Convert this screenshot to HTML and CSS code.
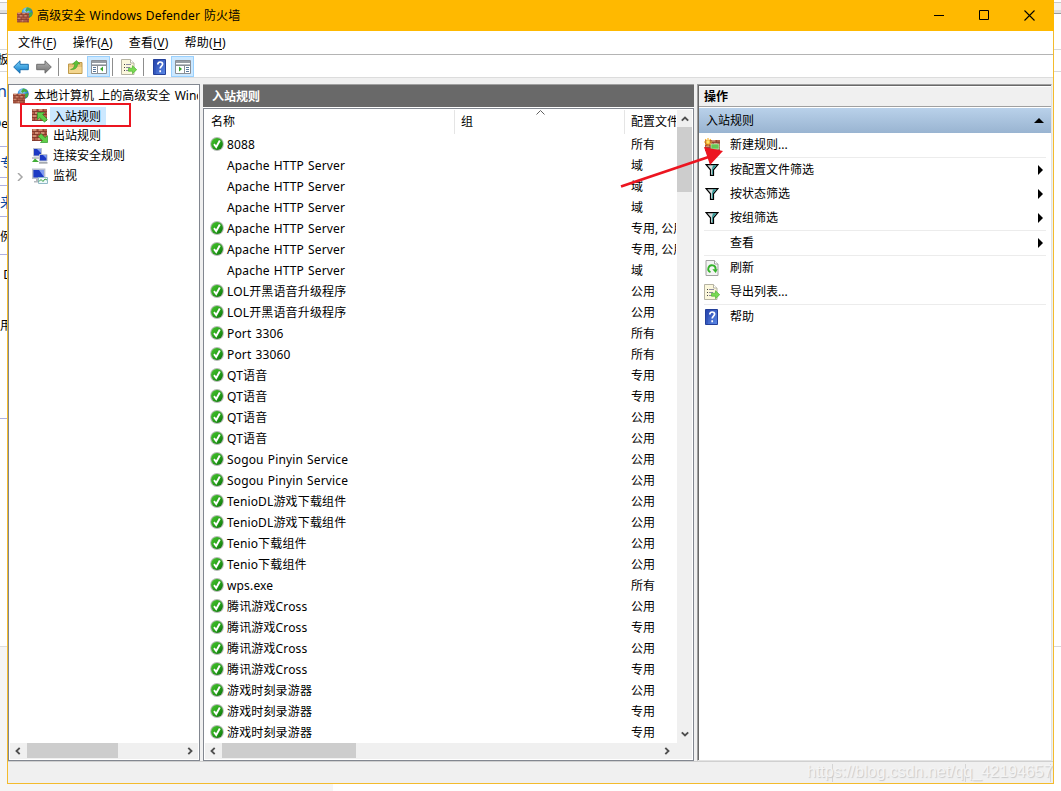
FILE: index.html
```html
<!DOCTYPE html>
<html lang="zh-CN">
<head>
  <meta charset="UTF-8">
  <meta name="viewport" content="width=device-width, initial-scale=1.0">
  <title>高级安全 Windows Defender 防火墙</title>
  <link rel="stylesheet" href="styles.css">
</head>
<body>

<!-- 图标 -->
<svg width="0" height="0" class="defs">
  <defs>
    <linearGradient id="g-ok" x1="0" y1="0" x2="1" y2="1"><stop offset="0" stop-color="#45c42c"/><stop offset=".5" stop-color="#2ba31d"/><stop offset="1" stop-color="#077008"/></linearGradient>
    <linearGradient id="g-blue" x1="0" y1="0" x2="0" y2="1"><stop offset="0" stop-color="#7fd4fa"/><stop offset="1" stop-color="#0a78c8"/></linearGradient>
    <linearGradient id="g-gray" x1="0" y1="0" x2="0" y2="1"><stop offset="0" stop-color="#b5b5b5"/><stop offset="1" stop-color="#707070"/></linearGradient>
    <linearGradient id="g-help" x1="0" y1="0" x2="1" y2="1"><stop offset="0" stop-color="#2440a8"/><stop offset="1" stop-color="#5b8ae8"/></linearGradient>
    <radialGradient id="g-globe" cx=".4" cy=".3" r=".7"><stop offset="0" stop-color="#bdeaff"/><stop offset=".5" stop-color="#3b9be6"/><stop offset="1" stop-color="#1551a8"/></radialGradient>
  </defs>
  <symbol id="ok" viewBox="0 0 14 14">
    <circle cx="7" cy="7" r="6.9" fill="#b4bab4"/>
    <circle cx="7" cy="7" r="5.9" fill="url(#g-ok)"/>
    <path d="M4 7.200l2.200 2.800 3.600-6.500" fill="none" stroke="#fff" stroke-width="1.900"/>
  </symbol>
  <symbol id="bricks" viewBox="0 0 15 12" preserveAspectRatio="none">
    <path d="M0 0h15v12H0z" fill="#b5604a"/>
    <path d="M1 0h3v2H1zM7 0h3v2H7zM3 3h3v2H3zM9 3h3v2H9zM1 6h3v2H1zM6 9h3v2H6z" fill="#d08d74"/>
    <path d="M0 2.500h15M0 5.500h15M0 8.500h15M0 11.500h15" stroke="#7c3528" stroke-width=".8"/>
    <path d="M5.500 0v3M11.500 0v3M2.500 3v3M8.500 3v3M13.500 3v3M5.500 6v3M11.500 6v3M2.500 9v3M8.500 9v3M13.500 9v3" stroke="#7c3528" stroke-width=".6"/>
  </symbol>
  <symbol id="firewall" viewBox="0 0 16 16">
    <circle cx="10.200" cy="5.700" r="5.500" fill="url(#g-globe)"/>
    <path d="M10 .4c2 .2 3.500 1 4.500 2.600l-1.500 1.500-1.500-1-2 1.500-1.500-1.500zM12 6l3-1c.8 2-.3 4-1.700 5.200L12 9z" fill="#48ad45"/>
    <use href="#bricks" x="0" y="5.500" width="12" height="10"/>
  </symbol>
  <symbol id="inbound" viewBox="0 0 16 14">
    <use href="#bricks" x="0" y="0" width="15" height="12"/>
    <path d="M5.500 3.500h7l-2 2 4.800 4.800-2.700 2.900L7.800 8.500l-2.300 2z" fill="#5fce49" stroke="#2f9a2a" stroke-width=".7"/>
  </symbol>
  <symbol id="outbound" viewBox="0 0 16 14">
    <use href="#bricks" x="0" y="0" width="15" height="12"/>
    <path d="M15.500 13.500h-7l2-2-4.200-4L9 4.700l4.200 4 2.300-2z" fill="#5fce49" stroke="#2f9a2a" stroke-width=".7"/>
  </symbol>
  <symbol id="computers" viewBox="0 0 16 16">
    <path d="M1.500.5h8v7.500h-8z" fill="#1b38c4" stroke="#b9bfce"/>
    <path d="M5 1h4v4z" fill="#7f9bf0"/>
    <path d="M0 9h7v2H0z" fill="#c4c8cc"/>
    <path d="M7.500 6.500h7.500v6.500H7.500z" fill="#1b38c4" stroke="#b9bfce"/>
    <path d="M11 7h3.500v3.500z" fill="#7f9bf0"/>
    <path d="M7 14h8.500v1.700H7z" fill="#a5aab0"/>
    <path d="M0 14l3-3.500 4 3.500z" fill="#41ad35"/>
  </symbol>
  <symbol id="monitor" viewBox="0 0 16 16">
    <path d="M.7 1.200h12v9H.7z" fill="#1c3bc4" stroke="#b9bfce" stroke-width="1.400"/>
    <path d="M7 2h5v7z" fill="#7f9bf0"/>
    <path d="M4 11h5v2h2v1.500H2V13h2z" fill="#b4b8be"/>
    <path d="M6.500 9.500h9v6h-9z" fill="#eef8fb" stroke="#91b9c6"/>
    <path d="M7 13.500l2-2 2 2 2-2.500 2 1" fill="none" stroke="#33a03c"/>
  </symbol>
  <symbol id="back" viewBox="0 0 16 14">
    <path d="M.7 7L7 .8v3.500h8.300v5.400H7v3.500z" fill="url(#g-blue)" stroke="#1b6eae"/>
  </symbol>
  <symbol id="forward" viewBox="0 0 16 14">
    <path d="M15.300 7L9 .8v3.500H.7v5.400H9v3.500z" fill="url(#g-gray)" stroke="#6f6f6f"/>
  </symbol>
  <symbol id="folder" viewBox="0 0 15 14">
    <path d="M.5 13.500V4h5l1-1.500h7.500v11z" fill="#e6c277" stroke="#bf9a4a"/>
    <path d="M1 7h12.500v6H1z" fill="#f3d68f"/>
    <path d="M2.500 9.500c2.800-.8 4.200-2.600 4.200-5.500H4.500L8.500.5 12 4H9.500c0 3.500-2.200 6-7 5.500z" fill="#5cc03c" stroke="#3c941f" stroke-width=".5"/>
  </symbol>
  <symbol id="pane-left" viewBox="0 0 16 14">
    <path d="M.5.5h15v13H.5z" fill="#fff" stroke="#8a8f96"/>
    <path d="M1 1h14v2H1z" fill="#989da4"/><path d="M1 4h14v1H1z" fill="#b8bcc2"/>
    <path d="M2 7.500h3M2 9.500h3M2 11.500h3" stroke="#58779b"/><path d="M6.500 5v8M1 5.500h14" stroke="#8a8f96"/>
    <path d="M12 6.500v5L9 9z" fill="#37a529"/>
  </symbol>
  <symbol id="pane-right" viewBox="0 0 16 14">
    <path d="M.5.5h15v13H.5z" fill="#fff" stroke="#8a8f96"/>
    <path d="M1 1h14v2H1z" fill="#989da4"/><path d="M1 4h14v1H1z" fill="#b8bcc2"/>
    <path d="M11 7.500h3M11 9.500h3M11 11.500h3" stroke="#58779b"/><path d="M9.500 5v8M1 5.500h14" stroke="#8a8f96"/>
    <path d="M4 6.500v5L7 9z" fill="#37a529"/>
  </symbol>
  <symbol id="export" viewBox="0 0 16 16">
    <path d="M.5.5h9l3.500 3.500v11.500H.5z" fill="#fbf7dc" stroke="#b5b3a2"/>
    <path d="M9.500.5V4H13" fill="#fff" stroke="#b5b3a2"/>
    <path d="M3 5.500h1M3 8.500h1M3 11.500h1" stroke="#444"/><path d="M5 5.500h5M5 8.500h4M5 11.500h3" stroke="#8c8aa0"/>
    <path d="M7.500 9.200h4V6.700l4.200 4-4.200 4v-2.500h-4z" fill="#78da52" stroke="#4fb532" stroke-width=".7"/>
  </symbol>
  <symbol id="help" viewBox="0 0 13 16">
    <path d="M.5.5h12v15H.5z" fill="url(#g-help)" stroke="#24409a"/>
    <path d="M2 1v14" stroke="#2a4cb6"/>
    <path d="M4.800 5.500c0-3.300 4.800-3.200 4.800-.4 0 2-2.400 2-2.400 4.400M7.200 11.300v1.900" fill="none" stroke="#fff" stroke-width="1.700"/>
  </symbol>
  <symbol id="newrule" viewBox="0 0 16 14">
    <use href="#bricks" x="1" y="2" width="15" height="11"/>
    <path d="M7 6h8v5H7z" fill="#66c653" stroke="#c8e6bd" stroke-width=".7"/>
    <path d="M4 0v8M0 4h8M1.200 1.200l5.600 5.600M6.800 1.200L1.200 6.800" stroke="#f4a91c" stroke-width="1.100"/>
    <circle cx="4" cy="4" r="1.700" fill="#ffe36b"/>
  </symbol>
  <symbol id="filter" viewBox="0 0 14 12">
    <path d="M1 .6h12L8.500 5.800v5.500h-3V5.800z" fill="#d5dcdc" stroke="#000" stroke-width="1.200"/>
    <path d="M8 1.300h3.500L7.900 5.500v5H7V5z" fill="#2f9492"/>
  </symbol>
  <symbol id="refresh" viewBox="0 0 13 16">
    <path d="M.5.5h8.500l3.500 3.500v11.500H.5z" fill="#f4f4f4" stroke="#a2a2a2"/>
    <path d="M9 .5V4h3.500" fill="#fff" stroke="#a2a2a2"/>
    <path d="M5 12.200A3.600 3.600 0 1 1 9.900 9.800" fill="none" stroke="#35b22b" stroke-width="1.900"/>
    <path d="M6.800 9.300h5.400L10.200 13z" fill="#35b22b"/>
  </symbol>
  <symbol id="chev" viewBox="0 0 8 8">
    <path d="M5.700.8L2.500 4l3.200 3.200" fill="none" stroke="#505050" stroke-width="1.900"/>
  </symbol>
</svg>

<!-- 后面被遮住的网页 -->
<div class="backdrop">
  <div class="edge edge-left">
    <i class="band"></i>
    <i class="line l49"></i><i class="line l71"></i>
    <i class="line blue l146"></i><i class="line blue l177"></i><i class="line blue l185"></i>
    <i class="line blue l216"></i><i class="line blue l254"></i><i class="line blue l418"></i>
    <i class="fill"></i>
    <span class="w w1">板</span>
    <span class="w w2 link">n</span>
    <span class="w w3">De</span>
    <span class="w w4 link">专</span>
    <span class="w w5 link">来</span>
    <span class="w w6">例</span>
    <span class="w w7">D</span>
    <span class="w w8">用</span>
  </div>
  <div class="edge edge-right">
    <i class="band"></i>
    <i class="line l49"></i><i class="line l71"></i>
    <i class="line l646"></i>
  </div>
  <div class="floor"></div>
</div>

<div class="window">
  <div class="titlebar">
    <svg class="app-icon"><use href="#firewall"/></svg>
    <span class="title">高级安全 Windows Defender 防火墙</span>
    <div class="controls">
      <svg width="10" height="10"><path d="M0 5.500h10" stroke="#000"/></svg>
      <svg width="10" height="10"><path d="M.5.5h9v9h-9z" fill="none" stroke="#000"/></svg>
      <svg width="11" height="11"><path d="M.5.5l10 10M10.500.5l-10 10" stroke="#000" stroke-width="1.100"/></svg>
    </div>
  </div>

  <div class="menubar">
    <span>文件(<u>F</u>)</span>
    <span>操作(<u>A</u>)</span>
    <span>查看(<u>V</u>)</span>
    <span>帮助(<u>H</u>)</span>
  </div>

  <div class="toolbar">
    <div class="tool t-back"><svg width="16" height="14"><use href="#back"/></svg></div>
    <div class="tool"><svg width="16" height="14"><use href="#forward"/></svg></div>
    <i class="sep sep-first"></i>
    <div class="tool"><svg width="15" height="14"><use href="#folder"/></svg></div>
    <div class="tool on"><svg width="16" height="14"><use href="#pane-left"/></svg></div>
    <i class="sep"></i>
    <div class="tool"><svg width="16" height="16"><use href="#export"/></svg></div>
    <i class="sep sep-last"></i>
    <div class="tool"><svg width="13" height="16"><use href="#help"/></svg></div>
    <div class="tool on"><svg width="16" height="14"><use href="#pane-right"/></svg></div>
  </div>

  <div class="panes">
    <!-- 左侧树 -->
    <div class="tree">
      <div class="node root"><svg width="16" height="16"><use href="#firewall"/></svg><span>本地计算机 上的高级安全 Wind</span></div>
      <div class="node"><svg width="16" height="14"><use href="#inbound"/></svg><span class="selected">入站规则</span></div>
      <div class="node"><svg width="16" height="14"><use href="#outbound"/></svg><span>出站规则</span></div>
      <div class="node"><svg width="16" height="16"><use href="#computers"/></svg><span>连接安全规则</span></div>
      <div class="node"><svg class="expander" width="8" height="8"><path d="M2 0l4 4-4 4" fill="none" stroke="#a6a6a6" stroke-width="1.500"/></svg><svg width="16" height="16"><use href="#monitor"/></svg><span>监视</span></div>
      <div class="hscroll">
        <svg width="8" height="8"><use href="#chev"/></svg>
        <i class="thumb"></i>
        <svg class="flip" width="8" height="8"><use href="#chev"/></svg>
      </div>
    </div>

    <!-- 规则列表 -->
    <div class="rules">
      <div class="caption">入站规则</div>
      <div class="list">
        <div class="list-main">
          <div class="table">
            <div class="head">
              <div class="c-name">名称</div>
              <div class="c-group">组<svg class="sort" width="9" height="5"><path d="M.5 4.500l4-4 4 4" fill="none" stroke="#606060"/></svg></div>
              <div class="c-profile">配置文件</div>
            </div>
            <div class="row"><svg><use href="#ok"/></svg><span>8088</span><em>所有</em></div>
            <div class="row"><svg></svg><span>Apache HTTP Server</span><em>域</em></div>
            <div class="row"><svg></svg><span>Apache HTTP Server</span><em>域</em></div>
            <div class="row"><svg></svg><span>Apache HTTP Server</span><em>域</em></div>
            <div class="row"><svg><use href="#ok"/></svg><span>Apache HTTP Server</span><em>专用, 公用</em></div>
            <div class="row"><svg><use href="#ok"/></svg><span>Apache HTTP Server</span><em>专用, 公用</em></div>
            <div class="row"><svg></svg><span>Apache HTTP Server</span><em>域</em></div>
            <div class="row"><svg><use href="#ok"/></svg><span>LOL开黑语音升级程序</span><em>公用</em></div>
            <div class="row"><svg><use href="#ok"/></svg><span>LOL开黑语音升级程序</span><em>公用</em></div>
            <div class="row"><svg><use href="#ok"/></svg><span>Port 3306</span><em>所有</em></div>
            <div class="row"><svg><use href="#ok"/></svg><span>Port 33060</span><em>所有</em></div>
            <div class="row"><svg><use href="#ok"/></svg><span>QT语音</span><em>专用</em></div>
            <div class="row"><svg><use href="#ok"/></svg><span>QT语音</span><em>专用</em></div>
            <div class="row"><svg><use href="#ok"/></svg><span>QT语音</span><em>公用</em></div>
            <div class="row"><svg><use href="#ok"/></svg><span>QT语音</span><em>公用</em></div>
            <div class="row"><svg><use href="#ok"/></svg><span>Sogou Pinyin Service</span><em>公用</em></div>
            <div class="row"><svg><use href="#ok"/></svg><span>Sogou Pinyin Service</span><em>公用</em></div>
            <div class="row"><svg><use href="#ok"/></svg><span>TenioDL游戏下载组件</span><em>公用</em></div>
            <div class="row"><svg><use href="#ok"/></svg><span>TenioDL游戏下载组件</span><em>公用</em></div>
            <div class="row"><svg><use href="#ok"/></svg><span>Tenio下载组件</span><em>公用</em></div>
            <div class="row"><svg><use href="#ok"/></svg><span>Tenio下载组件</span><em>公用</em></div>
            <div class="row"><svg><use href="#ok"/></svg><span>wps.exe</span><em>所有</em></div>
            <div class="row"><svg><use href="#ok"/></svg><span>腾讯游戏Cross</span><em>公用</em></div>
            <div class="row"><svg><use href="#ok"/></svg><span>腾讯游戏Cross</span><em>专用</em></div>
            <div class="row"><svg><use href="#ok"/></svg><span>腾讯游戏Cross</span><em>公用</em></div>
            <div class="row"><svg><use href="#ok"/></svg><span>腾讯游戏Cross</span><em>专用</em></div>
            <div class="row"><svg><use href="#ok"/></svg><span>游戏时刻录游器</span><em>公用</em></div>
            <div class="row"><svg><use href="#ok"/></svg><span>游戏时刻录游器</span><em>专用</em></div>
            <div class="row"><svg><use href="#ok"/></svg><span>游戏时刻录游器</span><em>专用</em></div>
          </div>
          <div class="vscroll">
            <svg class="up" width="8" height="8"><use href="#chev"/></svg>
            <i class="thumb"></i>
            <svg class="down" width="8" height="8"><use href="#chev"/></svg>
          </div>
        </div>
        <div class="hscroll wide">
          <svg width="8" height="8"><use href="#chev"/></svg>
          <i class="thumb"></i>
          <svg class="flip" width="8" height="8"><use href="#chev"/></svg>
        </div>
      </div>
    </div>

    <!-- 操作 -->
    <div class="actions">
      <div class="actions-title">操作</div>
      <div class="actions-group"><span>入站规则</span><i class="tri-up"></i></div>
      <div class="items">
        <div class="item"><svg width="16" height="14"><use href="#newrule"/></svg><span>新建规则...</span></div>
        <hr>
        <div class="item"><svg width="14" height="12"><use href="#filter"/></svg><span>按配置文件筛选</span><i class="tri"></i></div>
        <div class="item"><svg width="14" height="12"><use href="#filter"/></svg><span>按状态筛选</span><i class="tri"></i></div>
        <div class="item"><svg width="14" height="12"><use href="#filter"/></svg><span>按组筛选</span><i class="tri"></i></div>
        <hr>
        <div class="item"><svg width="14" height="12"></svg><span>查看</span><i class="tri"></i></div>
        <hr>
        <div class="item"><svg width="14" height="16"><use href="#refresh"/></svg><span>刷新</span></div>
        <div class="item"><svg width="16" height="16"><use href="#export"/></svg><span>导出列表...</span></div>
        <hr>
        <div class="item"><svg width="13" height="16"><use href="#help"/></svg><span>帮助</span></div>
      </div>
    </div>
  </div>

  <div class="statusbar"><i class="s1"></i><i class="s2"></i></div>
</div>

<!-- 标注 -->
<div class="mark-box"></div>
<svg class="mark-arrow" width="110" height="50">
  <path d="M1 43.500L90 13.500" stroke="#ec1520" stroke-width="2.800"/>
  <path d="M84 4L103 8 90 22z" fill="#ec1520"/>
</svg>
<div class="watermark">https://blog.csdn.net/qq_42194657</div>

</body>
</html>
```

FILE: styles.css
```css
* {
  box-sizing: border-box;
}
body {
  margin: 0;
  width: 1061px;
  height: 791px;
  overflow: hidden;
  position: relative;
  background: #fff;
  color: #000;
  font-family: "Noto Sans", "Noto Sans CJK SC", sans-serif;
  font-size: 12px;
  line-height: 20px;
  white-space: nowrap;
}
svg {
  display: block;
  flex: none;
}
.defs {
  position: absolute;
}
i, em {
  font-style: normal;
}

/* 背景网页 */
.backdrop {
  position: absolute;
  inset: 0;
}
.edge {
  position: absolute;
  top: 0;
  width: 8px;
  height: 791px;
  overflow: hidden;
}
.edge-left { left: 0; }
.edge-right { right: 0; }
.edge i, .edge .w {
  position: absolute;
}
.band {
  top: 0;
  width: 8px;
  height: 14px;
  background: linear-gradient(#fff 2px, #c8c8c8 2px, #c8c8c8 3px, #f3f3f3 3px, #f3f3f3 10px, #dedede 10px, #dedede 13px, #999 13px);
}
.line {
  width: 8px;
  height: 1px;
  background: #d8d8d8;
}
.line.blue { background: #aeb0e0; }
.l49 { top: 49px; }
.l71 { top: 71px; }
.l146 { top: 146px; }
.l177 { top: 177px; }
.l185 { top: 185px; }
.l216 { top: 216px; }
.l254 { top: 254px; }
.l418 { top: 418px; }
.l646 { top: 646px; }
.fill {
  top: 646px;
  width: 8px;
  height: 145px;
  background: #f5f5f5;
  border-top: 1px solid #ddd;
}
.w { right: 0; }
.w1 { top: 50px; right: -1px; }
.w2 { top: 81px; right: 1px; font-size: 16px; }
.w3 { top: 114px; }
.w4 { top: 153px; right: -6px; font-size: 14px; }
.w5 { top: 192px; right: -6px; font-size: 14px; }
.w6 { top: 227px; right: -4px; }
.w7 { top: 265px; right: -4px; }
.w8 { top: 316px; right: -4px; }
.link { color: #0d47a1; }
.floor {
  position: absolute;
  left: 0;
  top: 784px;
  width: 333px;
  height: 7px;
  background: #f5f5f5;
}

/* 窗口 */
.window {
  position: relative;
  width: 1047px;
  height: 784px;
  margin-left: 7px;
  border: 1px solid #f3bb2d;
  border-top: none;
  background: #f0f0f0;
  display: flex;
  flex-direction: column;
}
.titlebar {
  height: 31px;
  margin: 0 -1px;
  background: #ffb900;
  display: flex;
  align-items: center;
}
.app-icon {
  width: 16px;
  height: 16px;
  margin: 0 4px 1px 10px;
}
.title {
  flex: 1;
  padding-top: 1px;
  letter-spacing: 0.15px;
  word-spacing: 0.7px;
}
.controls {
  display: flex;
  align-items: center;
  gap: 35px;
  padding: 0 19px 1px 0;
}
.menubar {
  height: 24px;
  padding-left: 10px;
  background: #fff;
  border-bottom: 1px solid #b4b4b4;
  display: flex;
  align-items: center;
  gap: 16px;
  letter-spacing: 0.25px;
}
.menubar u {
  text-underline-offset: 2px;
}
.toolbar {
  height: 23px;
  padding-top: 1px;
  background: #fff;
  border-bottom: 1px solid #dcdcdc;
  display: flex;
  align-items: center;
}
.tool {
  width: 23px;
  height: 21px;
  display: flex;
  align-items: center;
  justify-content: center;
}
.t-back {
  margin-left: 1px;
}
.tool.on {
  background: #cce8ff;
  border: 1px solid #99d1ff;
}
.sep {
  width: 1px;
  height: 18px;
  margin: 0 4px 0 2px;
  background: #8d8d8d;
}
.sep-first {
  margin: 0 5px 0 3px;
}
.sep-last {
  margin-left: 3px;
}

.panes {
  height: 683px;
  padding: 6px 1px 0 0;
  display: flex;
}

/* 树 */
.tree {
  width: 192px;
  height: 677px;
  border: 1px solid #828790;
  background: #fff;
  padding: 1px 1px 1px;
  display: flex;
  flex-direction: column;
  overflow: hidden;
}
.node {
  height: 20px;
  padding-left: 22px;
  display: flex;
  align-items: center;
  gap: 2px;
  position: relative;
}
.node.root {
  padding-left: 3px;
  gap: 5px;
}
.node span {
  padding: 0 3px;
}
.node.root span {
  padding: 0;
  overflow: hidden;
  word-spacing: 1.2px;
}
.node .selected {
  background: #cce8ff;
  height: 19px;
  line-height: 19px;
  padding-right: 5px;
}
.expander {
  position: absolute;
  left: 6px;
  top: 7px;
}
.hscroll {
  height: 16px;
  margin-top: auto;
  background: #f0f0f0;
  display: flex;
  align-items: center;
  padding: 0 4px 1px 4px;
}
.hscroll .thumb {
  width: 91px;
  height: 15px;
  margin: 0 auto 0 5px;
  background: #cdcdcd;
}
.flip {
  transform: scaleX(-1);
}

/* 列表 */
.rules {
  width: 491px;
  height: 677px;
  margin-left: 3px;
}
.caption {
  height: 24px;
  border-top: 1px solid #a0a0a0;
  border-bottom: 1px solid #fff;
  background: #696969;
  color: #fff;
  font-weight: bold;
  line-height: 23px;
  padding-left: 9px;
}
.list {
  height: 653px;
  border: 1px solid #828790;
  background: #fff;
  padding: 1px;
  display: flex;
  flex-direction: column;
}
.list-main {
  display: flex;
  height: 633px;
}
.table {
  width: 471px;
  overflow: hidden;
}
.head {
  height: 24px;
  display: flex;
  line-height: 24px;
}
.head div {
  border-right: 1px solid #e5e5e5;
  padding-left: 6px;
  flex: none;
}
.c-name { width: 250px; }
.c-group { width: 170px; position: relative; }
.c-profile { width: 90px; }
.sort {
  position: absolute;
  left: 81px;
  top: 0;
}
.row {
  height: 21px;
  line-height: 21px;
  display: flex;
  align-items: center;
}
.row svg {
  width: 14px;
  height: 14px;
  margin: 0 3px 1px 5px;
}
.row span {
  width: 404px;
  flex: none;
  letter-spacing: 0.15px;
  word-spacing: 0.8px;
}
.vscroll {
  width: 15px;
  margin-left: 1px;
  background: #f0f0f0;
  display: flex;
  flex-direction: column;
  align-items: center;
}
.vscroll .thumb {
  width: 15px;
  height: 65px;
  margin-bottom: auto;
  background: #cdcdcd;
}
.vscroll svg {
  margin: 5px 0 4px;
}
.vscroll .down {
  margin-bottom: 5px;
}
.up { transform: rotate(90deg); }
.down { transform: rotate(-90deg); }
.wide {
  padding-right: 21px;
}

.wide .thumb {
  width: 134px;
}

/* 操作面板 */
.actions {
  width: 355px;
  height: 677px;
  margin-left: 3px;
  border-left: 1px solid #a0a0a0;
  border-top: 1px solid #a0a0a0;
  border-right: 1px solid #e3e3e3;
  border-bottom: 1px solid #e3e3e3;
  background: #fff;
  box-shadow: inset 1px 1px 0 #696969;
  padding: 2px 0 0 1px;
}
.actions-title {
  height: 20px;
  padding-left: 5px;
  background: #f0f0f0;
  border-bottom: 1px solid #a0a0a0;
  font-weight: bold;
  line-height: 20px;
}
.actions-group {
  height: 25px;
  margin-top: 1px;
  padding: 0 7px 0 7px;
  background: linear-gradient(#b9d1ea, #99b4d1);
  display: flex;
  align-items: center;
  justify-content: space-between;
}
.tri-up {
  border: 5px solid transparent;
  border-top: none;
  border-bottom-color: #000;
}
.items {
  padding: 0 5px;
}
.items hr {
  height: 1px;
  margin: 0;
  border: none;
  background: #ececec;
}
.item {
  height: 24px;
  display: flex;
  align-items: center;
}
.item svg {
  margin-left: 1px;
}
.item span {
  flex: 1;
}
.item svg[width="16"] { margin: 0 10px 0 0; }
.item svg[width="14"] { margin-right: 11px; }
.item svg[width="13"] { margin-right: 12px; }
.tri {
  margin: 0 3px 1px 0;
  border: 5px solid transparent;
  border-right: none;
  border-left-color: #000;
}

.statusbar {
  flex: 1;
  border-top: 1px solid #d0d0d0;
  display: flex;
  align-items: center;
  justify-content: flex-end;
  padding-right: 2px;
}
.statusbar i {
  height: 18px;
  border-right: 1px solid #d5d5d5;
}
.s1 {
  width: 134px;
  border-left: 1px solid #d5d5d5;
}
.s2 {
  width: 85px;
}

/* 标注 */
.mark-box {
  position: absolute;
  left: 20px;
  top: 103px;
  width: 111px;
  height: 24px;
  border: 2px solid #ec1520;
}
.mark-arrow {
  position: absolute;
  left: 620px;
  top: 143px;
}
.watermark {
  position: absolute;
  left: 807px;
  top: 762px;
  font-family: "Liberation Sans", sans-serif;
  font-size: 16px;
  color: #f4f4f4;
  text-shadow: 1px 1px 1px #c8c8c8;
}
```
